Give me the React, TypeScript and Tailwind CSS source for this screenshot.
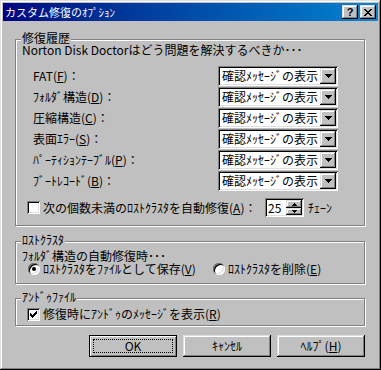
const raised =
  'shadow-[inset_-1px_-1px_#000,inset_1px_1px_#dfdfdf,inset_-2px_-2px_#808080,inset_2px_2px_#fff]'
const sunken =
  'shadow-[inset_1px_1px_#808080,inset_-1px_-1px_#fff,inset_2px_2px_#000,inset_-2px_-2px_#dfdfdf]'

const rows = [
  { label: 'FAT', key: 'F' },
  { label: 'ﾌｫﾙﾀﾞ構造', key: 'D' },
  { label: '圧縮構造', key: 'C' },
  { label: '表面ｴﾗｰ', key: 'S' },
  { label: 'ﾊﾟｰﾃｨｼｮﾝﾃｰﾌﾞﾙ', key: 'P' },
  { label: 'ﾌﾞｰﾄﾚｺｰﾄﾞ', key: 'B' },
]

// pixel patterns for small glyphs
const closeGlyph = ['11....11', '.11..11.', '..1111..', '...11...', '..1111..', '.11..11.', '11....11']
const checkGlyph = ['......1', '.....11', '1...111', '11.111.', '11111..', '.111...', '..1....']

function Pixels({ rows, className }: { rows: string[]; className?: string }) {
  return (
    <svg width={rows[0].length} height={rows.length} className={className} shapeRendering="crispEdges">
      {rows.flatMap((r, y) =>
        r.split('').map((c, x) => (c === '1' ? <rect key={`${x}-${y}`} x={x} y={y} width={1} height={1} fill="#000" /> : null))
      )}
    </svg>
  )
}

function Key({ k }: { k: string }) {
  return (
    <>
      (<span className="underline underline-offset-1">{k}</span>)
    </>
  )
}

function Combo() {
  return (
    <div className={`flex h-[20px] w-[120px] items-center bg-white ${sunken}`}>
      <span className="pl-[4px] whitespace-nowrap">確認ﾒｯｾｰｼﾞの表示</span>
      <span className={`ml-auto mr-[2px] flex h-[16px] w-[16px] items-center justify-center bg-[#c0c0c0] ${raised}`}>
        <svg width="7" height="4" shapeRendering="crispEdges">
          <polygon points="0,0 7,0 3.5,4" fill="#000" />
        </svg>
      </span>
    </div>
  )
}

function Checkbox({ checked }: { checked?: boolean }) {
  return (
    <span className={`flex h-[13px] w-[13px] shrink-0 items-center justify-center bg-white ${sunken}`}>
      {checked && <Pixels rows={checkGlyph} />}
    </span>
  )
}

function Radio({ checked }: { checked?: boolean }) {
  return (
    <span className="flex h-[12px] w-[12px] shrink-0 items-center justify-center rounded-full bg-white shadow-[inset_1px_1px_0_#808080,inset_-1px_-1px_0_#fff,inset_2px_2px_0_#000,inset_-2px_-2px_0_#dfdfdf]">
      {checked && <span className="h-[4px] w-[4px] rounded-full bg-black" />}
    </span>
  )
}

function Group({ title, className, children }: { title: string; className: string; children: React.ReactNode }) {
  return (
    <div className={`relative border border-[#808080] shadow-[inset_1px_1px_#fff,1px_1px_#fff] ${className}`}>
      <span className="absolute left-[5px] top-[-8px] bg-[#c0c0c0] px-[1px] whitespace-nowrap">{title}</span>
      {children}
    </div>
  )
}

export default function App() {
  return (
    <div
      className={`flex h-[370px] w-[381px] flex-col bg-[#c0c0c0] p-[3px] text-[12px] leading-[12px] text-black font-['Noto_Sans_CJK_JP',sans-serif] ${raised}`}
    >
      {/* Title bar */}
      <div className="flex h-[18px] items-center bg-linear-to-r from-[#000080] to-[#1084d0] pl-[2px] pr-[2px]">
        <span className="text-[11px] text-white whitespace-nowrap">カスタム修復のｵﾌﾟｼｮﾝ</span>
        <span className={`ml-auto flex h-[14px] w-[16px] items-center justify-center bg-[#c0c0c0] ${raised}`}>
          <span className="font-['Liberation_Sans',sans-serif] text-[11px] font-bold leading-none">?</span>
        </span>
        <span className={`ml-[2px] flex h-[14px] w-[16px] items-center justify-center bg-[#c0c0c0] ${raised}`}>
          <Pixels rows={closeGlyph} />
        </span>
      </div>

      <div className="pl-[12px] pr-[13px]">
        {/* 修復履歴 */}
        <Group title="修復履歴" className="mt-[18px] h-[187px]">
          <p className="ml-[6px] mt-[4px] whitespace-nowrap">Norton Disk Doctorはどう問題を解決するべきか･･･</p>
          <div className="mt-[9px]">
            {rows.map((r) => (
              <div key={r.key} className="flex h-[21px] items-center">
                <span className="ml-[17px] w-[185px] whitespace-nowrap">
                  {r.label}
                  <Key k={r.key} />：
                </span>
                <Combo />
              </div>
            ))}
          </div>
          <div className="mt-[7px] flex h-[19px] items-center">
            <span className="ml-[11px]">
              <Checkbox />
            </span>
            <span className="ml-[3px] w-[222px] whitespace-nowrap">
              次の個数未満のﾛｽﾄｸﾗｽﾀを自動修復<Key k="A" />：
            </span>
            <div className={`flex h-[19px] w-[39px] bg-white p-[2px] ${sunken}`}>
              <span className="flex-1 pl-[1px] leading-[15px]">25</span>
              <div className="flex w-[16px] flex-col">
                <span className={`flex h-[8px] items-center justify-center bg-[#c0c0c0] ${raised}`}>
                  <svg width="5" height="3" shapeRendering="crispEdges">
                    <polygon points="2.5,0 5,3 0,3" fill="#000" />
                  </svg>
                </span>
                <span className={`flex h-[7px] items-center justify-center bg-[#c0c0c0] ${raised}`}>
                  <svg width="5" height="3" shapeRendering="crispEdges">
                    <polygon points="0,0 5,0 2.5,3" fill="#000" />
                  </svg>
                </span>
              </div>
            </div>
            <span className="ml-[4px] whitespace-nowrap">ﾁｪｰﾝ</span>
          </div>
        </Group>

        {/* ロストクラスタ */}
        <Group title="ﾛｽﾄｸﾗｽﾀ" className="mt-[15px] h-[43px]">
          <p className="ml-[6px] mt-[8px] whitespace-nowrap">ﾌｫﾙﾀﾞ構造の自動修復時･･･</p>
          <div className="flex h-[14px] items-center">
            <span className="ml-[12px]">
              <Radio checked />
            </span>
            <span className="ml-[3px] w-[170px] whitespace-nowrap">
              ﾛｽﾄｸﾗｽﾀをﾌｧｲﾙとして保存<Key k="V" />
            </span>
            <Radio />
            <span className="ml-[3px] whitespace-nowrap">
              ﾛｽﾄｸﾗｽﾀを削除<Key k="E" />
            </span>
          </div>
        </Group>

        {/* アンドゥファイル */}
        <Group title="ｱﾝﾄﾞｩﾌｧｲﾙ" className="mt-[14px] h-[28px]">
          <div className="mt-[8px] flex h-[14px] items-center">
            <span className="ml-[11px]">
              <Checkbox checked />
            </span>
            <span className="ml-[3px] whitespace-nowrap">
              修復時にｱﾝﾄﾞｩのﾒｯｾｰｼﾞを表示<Key k="R" />
            </span>
          </div>
        </Group>

        {/* Buttons */}
        <div className="mt-[9px] flex justify-end gap-[6px]">
          <button className="relative flex h-[22px] w-[88px] items-center justify-center border border-black bg-[#c0c0c0] shadow-[inset_1px_1px_#fff,inset_-1px_-1px_#808080]">
            <span className="absolute inset-[3px] border border-dotted border-black" />
            OK
          </button>
          <button className={`flex h-[22px] w-[88px] items-center justify-center bg-[#c0c0c0] ${raised}`}>ｷｬﾝｾﾙ</button>
          <button className={`flex h-[22px] w-[88px] items-center justify-center bg-[#c0c0c0] ${raised}`}>
            ﾍﾙﾌﾟ<Key k="H" />
          </button>
        </div>
      </div>
    </div>
  )
}
